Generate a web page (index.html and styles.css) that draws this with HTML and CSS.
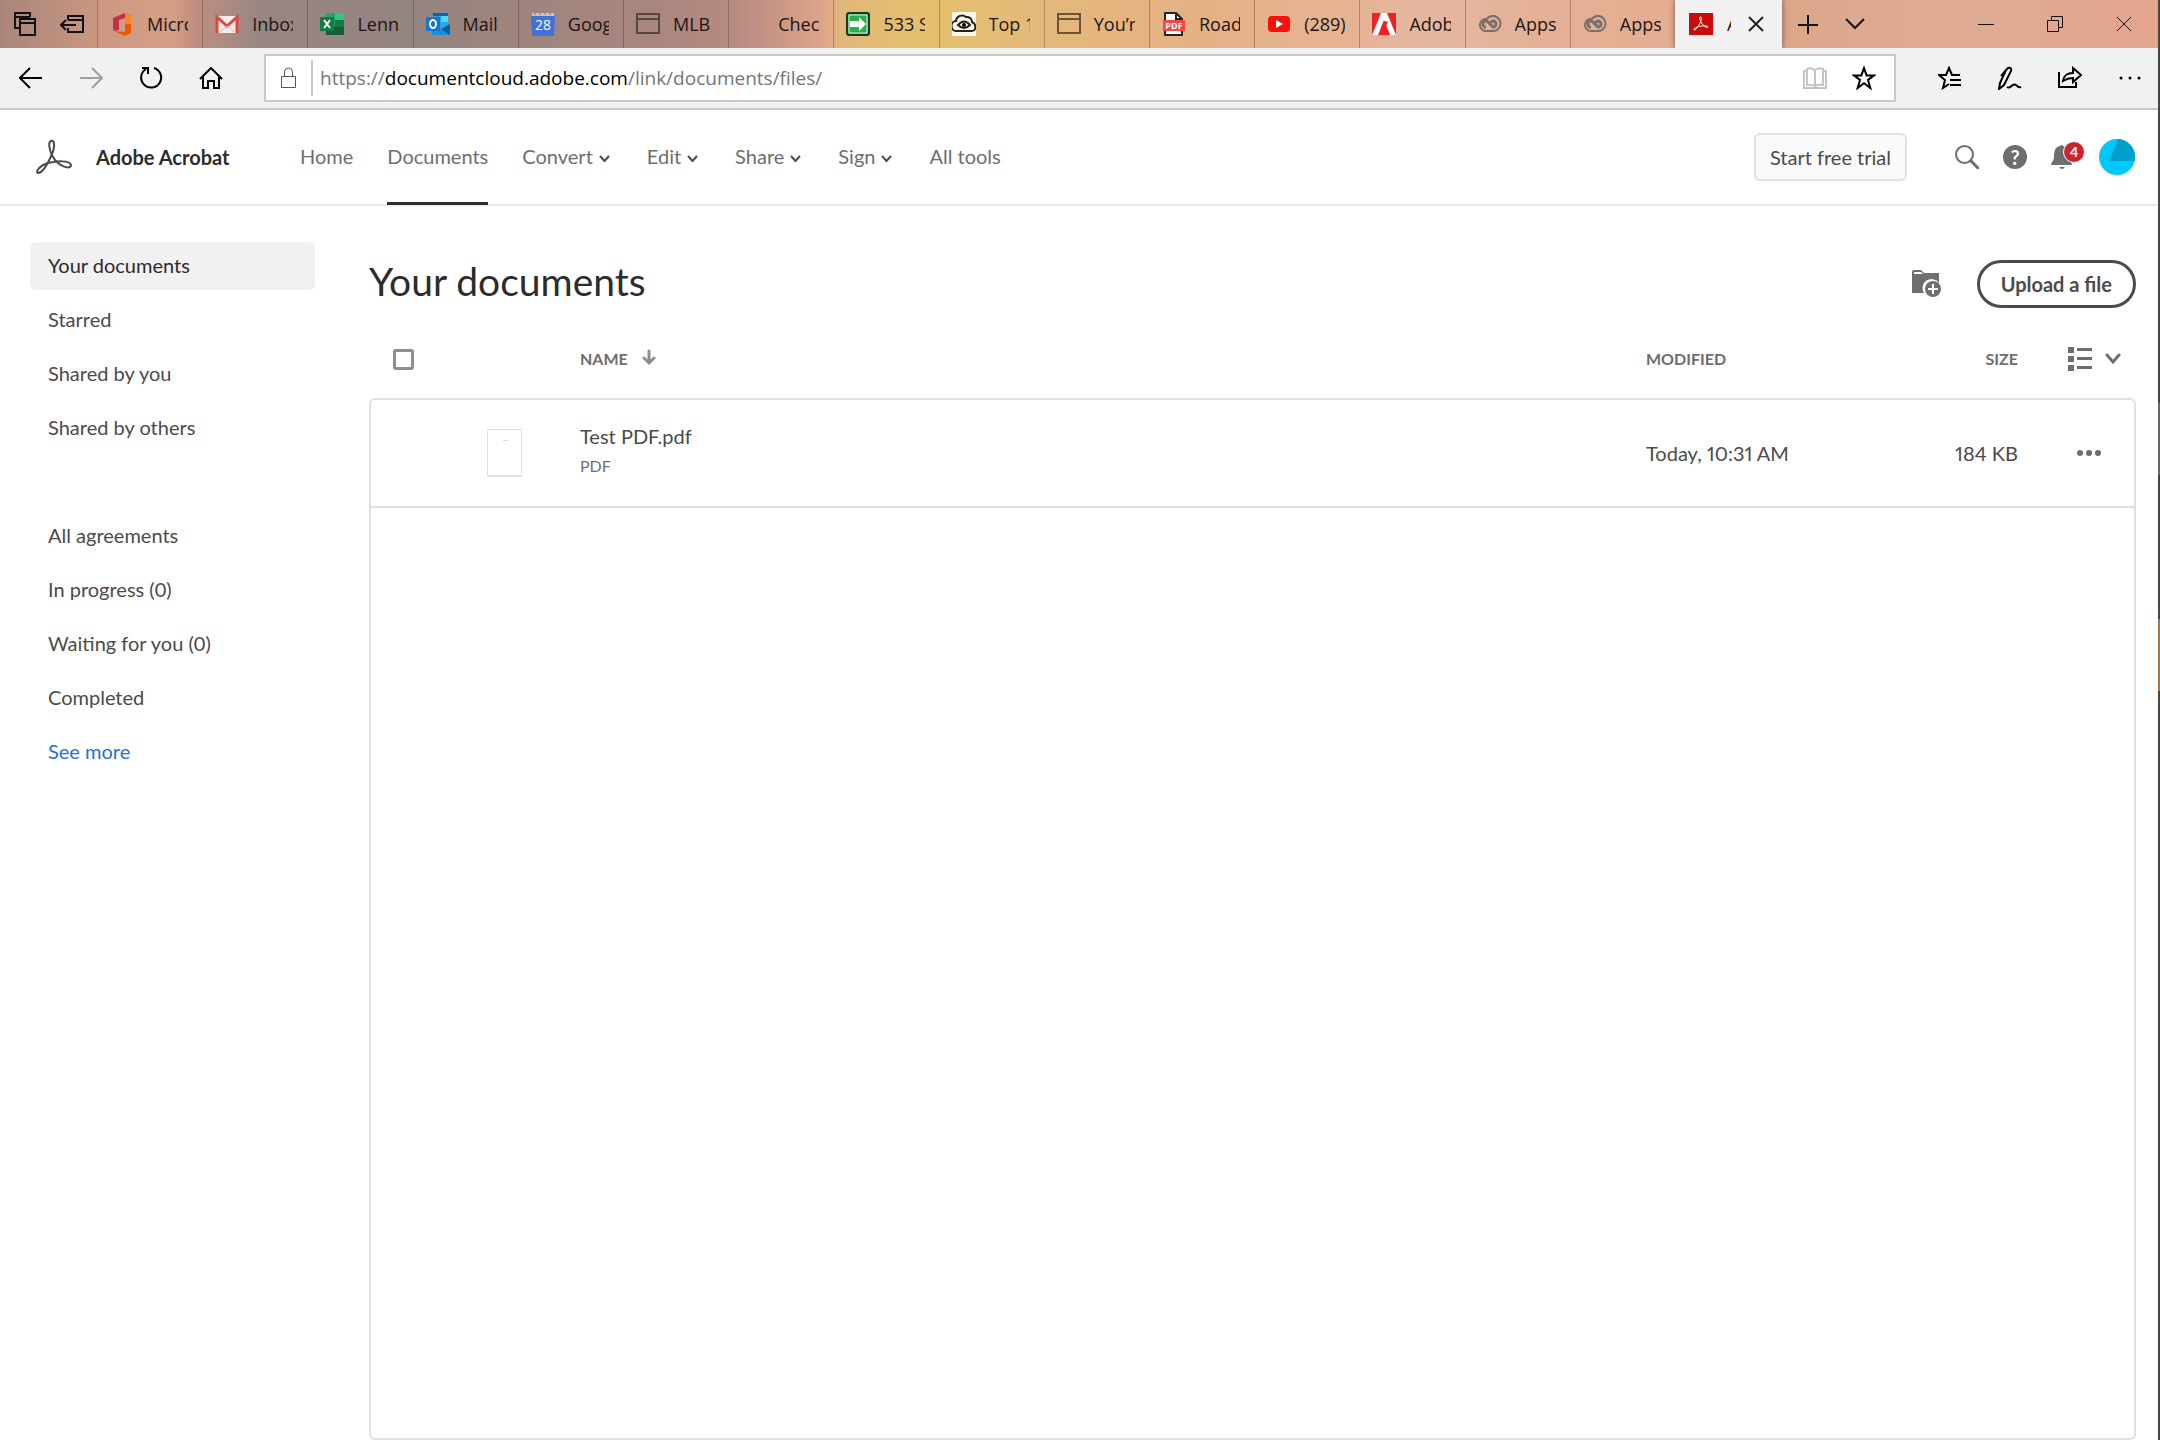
FILE: index.html
```html
<!DOCTYPE html>
<html lang="en">
<head>
    <meta charset="UTF-8">
    <meta name="viewport" content="width=device-width, initial-scale=1.0">
    <title>Adobe Acrobat</title>
    <link rel="stylesheet" href="styles.css">
</head>
<body>
<div class="window">

    <!-- browser tabs -->
    <div class="titlebar">
        <div class="tab-tools">
            <button class="icon-btn" aria-label="Tabs you've set aside"><svg width="24" height="26" viewBox="0 0 24 26" fill="none" stroke="#111" stroke-width="2"><path d="M6 17H2V2h15v4M2 6h15"/><path d="M7 8h15v16H7zM7 12h15"/></svg></button>
            <button class="icon-btn" aria-label="Set these tabs aside"><svg width="24" height="20" viewBox="0 0 24 20" fill="none" stroke="#111" stroke-width="2"><path d="M8 6V2h15v16H8v-4M8 6h15M1 11h15M6 6l-5 5 5 5"/></svg></button>
        </div>
        <div class="tabs">
            <a class="tab" href="#"><svg width="24" height="24" viewBox="0 0 24 24"><path d="M3 6L15 1v5L9 8v10l-5 1-1-3z" fill="#c2304a"/><path d="M15 1l6 2v18l-6 3L4 19l11 1z" fill="#e8590c"/><path d="M15 1l6 2v9h-6z" fill="#f58a1f"/></svg><span>Micro</span></a>
            <a class="tab" href="#"><svg width="24" height="24" viewBox="0 0 24 24"><path d="M1 4h22v17H1z" fill="#f6ebe8"/><path d="M2 21V5l10 9 10-9v16" fill="none" stroke="#dc4a41" stroke-width="3"/><path d="M5 20l7-6 7 6" fill="none" stroke="#d8b9b5"/></svg><span>Inbox</span></a>
            <a class="tab" href="#"><svg width="24" height="24" viewBox="0 0 24 24"><path d="M6 1h9v22H6z" fill="#21a366"/><path d="M15 1h9v7h-9z" fill="#33c481"/><path d="M15 8h9v7h-9z" fill="#107c41"/><path d="M6 15h18v8H6z" fill="#185c37"/><path d="M0 5h14v14H0z" fill="#107c41"/><path d="M4 8l6 8M10 8l-6 8" stroke="#fff" stroke-width="2"/></svg><span>Lenn</span></a>
            <a class="tab" href="#"><svg width="24" height="24" viewBox="0 0 24 24"><path d="M7 1h15v14H7z" fill="#28a8ea"/><path d="M7 1h15v3H7z" fill="#0364b8"/><path d="M15 4h7v6h-7z" fill="#50d9ff"/><path d="M6 13l9 4 9-5v11H6z" fill="#1490df"/><path d="M24 12v11l-9-6z" fill="#0a5ea8"/><path d="M0 5h14v14H0z" fill="#0f78d4"/><ellipse cx="7" cy="12" rx="3" ry="4" fill="none" stroke="#fff" stroke-width="2"/></svg><span>Mail</span></a>
            <a class="tab" href="#"><svg width="24" height="24" viewBox="0 0 24 24"><path d="M1 1h22v4H1z" fill="#c5c5c8"/><path d="M0 4h24l-1 20H1z" fill="#4070d8"/><path d="M4 1v2M9 1v2M14 1v2M19 1v2" stroke="#777"/><text x="12" y="18" class="cal-day">28</text></svg><span>Goog</span></a>
            <a class="tab" href="#"><svg width="24" height="24" viewBox="0 0 24 24" fill="none" stroke="#57453f" stroke-width="2"><path d="M1 2h22v19H1zM1 7h22"/></svg><span>MLB</span></a>
            <a class="tab" href="#"><svg width="24" height="24" viewBox="0 0 24 24" fill="none" stroke="#dc8690" stroke-width="2"><path d="M11 2v6M6 15l11 6M13 12L6 24" opacity=".7"/></svg><span>Chec</span></a>
            <a class="tab" href="#"><svg width="24" height="24" viewBox="0 0 24 24"><rect x="1" y="1" width="22" height="22" rx="2" fill="#2dad4f" stroke="#173a20" stroke-width="2"/><path d="M3 3h18v18H3z" fill="none" stroke="#dff2df"/><path d="M4 9h9V5l7 7-7 7v-4H4z" fill="#fff"/></svg><span>533 S</span></a>
            <a class="tab" href="#"><svg width="24" height="24" viewBox="0 0 24 24"><path d="M0 0h24v24H0z" fill="#faf6e8"/><path d="M5 19a5 5 0 0 1-1-10 6 6 0 0 1 10-4 5 5 0 0 1 6 5c5 2 4 9 0 9z" fill="none" stroke="#222" stroke-width="2"/><path d="M6 13q6-7 12 0-6 6-12 0z" fill="none" stroke="#222" stroke-width="2"/><circle cx="12" cy="13" r="2"/></svg><span>Top 1</span></a>
            <a class="tab" href="#"><svg width="24" height="24" viewBox="0 0 24 24" fill="none" stroke="#6b5438" stroke-width="2"><path d="M1 2h22v19H1zM1 7h22"/></svg><span>You’r</span></a>
            <a class="tab" href="#"><svg width="24" height="24" viewBox="0 0 24 24"><path d="M3 1h11l6 6v16H3z" fill="#fff" stroke="#222" stroke-width="2"/><path d="M14 1v6h6" fill="none" stroke="#222" stroke-width="2"/><path d="M1 8h22v11H1z" fill="#f04848"/><text x="12" y="17" class="pdf-mark">PDF</text></svg><span>Road</span></a>
            <a class="tab" href="#"><svg width="24" height="24" viewBox="0 0 24 24"><rect x="1" y="4" width="22" height="16" rx="4" fill="#f8100c"/><path d="M9 8l7 4-7 4z" fill="#fff"/></svg><span>(289)</span></a>
            <a class="tab" href="#"><svg width="24" height="24" viewBox="0 0 24 24"><path d="M0 1h24v22H0z" fill="#ed2224"/><path d="M9 1h6l9 22h-6l-2-5h-4l4-8 1 0-5-1-6 14H0z" fill="#fff"/><path d="M12 8l6 15h-4l-2-5H8z" fill="#ed2224"/></svg><span>Adob</span></a>
            <a class="tab" href="#"><svg width="24" height="24" viewBox="0 0 24 24" fill="none" stroke="#77706b" stroke-width="2"><path d="M7 19a6 6 0 1 1 2-12 7.500 7.500 0 1 1 7 12z"/><path d="M8 15a3 3 0 1 1 2-5l5 5a3 3 0 1 0 0-6 5 5 0 0 0-3 2" stroke-width="3"/></svg><span>Apps</span></a>
            <a class="tab" href="#"><svg width="24" height="24" viewBox="0 0 24 24" fill="none" stroke="#77706b" stroke-width="2"><path d="M7 19a6 6 0 1 1 2-12 7.500 7.500 0 1 1 7 12z"/><path d="M8 15a3 3 0 1 1 2-5l5 5a3 3 0 1 0 0-6 5 5 0 0 0-3 2" stroke-width="3"/></svg><span>Apps</span></a>
        </div>
        <div class="tab-active">
            <svg width="24" height="24" viewBox="0 0 24 24"><path d="M0 1h24v22H0z" fill="#c80a0a"/><path d="M11 5c3-1 1 7-5 13-4 0 2-5 12-4 3 2-2 3-6-4-1-2-2-4-1-5z" fill="none" stroke="#fff" stroke-width="1"/></svg>
            <span>A</span>
            <button class="icon-btn" aria-label="Close tab"><svg width="16" height="16" viewBox="0 0 16 16" stroke="#222" stroke-width="2"><path d="M1 1l14 14M15 1L1 15"/></svg></button>
        </div>
        <div class="window-tools">
            <button class="icon-btn" aria-label="New tab"><svg width="20" height="20" viewBox="0 0 20 20" stroke="#111" stroke-width="2"><path d="M0 11h20M10 1v20"/></svg></button>
            <button class="icon-btn" aria-label="Show tab previews"><svg width="20" height="12" viewBox="0 0 20 12" fill="none" stroke="#111" stroke-width="2"><path d="M1 1l9 9 9-9"/></svg></button>
            <div class="window-buttons">
                <button class="icon-btn" aria-label="Minimize"><svg width="16" height="16" viewBox="0 0 16 16" stroke="#111"><path d="M0 8.500h16"/></svg></button>
                <button class="icon-btn" aria-label="Restore"><svg width="16" height="16" viewBox="0 0 16 16" fill="none" stroke="#111"><path d="M.5 4.500h11v11H.5zM4.500 4V.5h11v11H12"/></svg></button>
                <button class="icon-btn" aria-label="Close"><svg width="16" height="16" viewBox="0 0 16 16" stroke="#111"><path d="M1 1l14 14M15 1L1 15"/></svg></button>
            </div>
        </div>
    </div>

    <!-- address bar -->
    <div class="toolbar">
        <div class="nav-buttons">
            <button class="icon-btn" aria-label="Back"><svg width="24" height="22" viewBox="0 0 24 22" fill="none" stroke="#000" stroke-width="2"><path d="M11 1L1 11l10 10M1 11h22"/></svg></button>
            <button class="icon-btn" aria-label="Forward"><svg width="24" height="22" viewBox="0 0 24 22" fill="none" stroke="#a0a0a0" stroke-width="2"><path d="M13 1l10 10-10 10M23 11H1"/></svg></button>
            <button class="icon-btn" aria-label="Refresh"><svg width="24" height="24" viewBox="0 0 24 24" fill="none" stroke="#000" stroke-width="2"><path d="M15 2a10 10 0 1 1-8 1M3 2h6v6"/></svg></button>
            <button class="icon-btn" aria-label="Home"><svg width="24" height="22" viewBox="0 0 24 22" fill="none" stroke="#000" stroke-width="2"><path d="M1 12L12 1l11 11M4 10v11h5v-7h6v7h5V10"/></svg></button>
        </div>
        <div class="address">
            <svg width="18" height="22" viewBox="0 0 18 22" fill="none" stroke="#555" stroke-width="1"><path d="M1.500 9.500h14v11h-14zM4.500 9.500V5a4 4 0 0 1 8 0v4.500"/></svg>
            <div class="url"><span>https://</span><b>documentcloud.adobe.com</b><span>/link/documents/files/</span></div>
            <button class="icon-btn" aria-label="Reading view"><svg width="24" height="22" viewBox="0 0 24 22" fill="none" stroke="#c4c4c4" stroke-width="2"><path d="M12 3v16M12 3q-4-3-8-1v16q4-1 8 1 4-2 8-1V2q-4-2-8 1M4 4H1v17h22V4h-3"/></svg></button>
            <button class="icon-btn" aria-label="Add to favorites"><svg width="24" height="24" viewBox="0 0 24 24" fill="none" stroke="#000" stroke-width="2"><path d="M12 2l2.600 7.400H22l-6 4.600 2.300 8L12 17.300 5.700 22 8 14 2 9.400h7.400z"/></svg></button>
        </div>
        <div class="browser-buttons">
            <button class="icon-btn" aria-label="Favorites"><svg width="24" height="24" viewBox="0 0 24 24" fill="none" stroke="#000" stroke-width="2"><path d="M22 9h-8l-3-7-3 7H1l6 5-2 8 6-4M12 14h11M12 19h11"/></svg></button>
            <button class="icon-btn" aria-label="Add notes"><svg width="24" height="24" viewBox="0 0 24 24" fill="none" stroke="#000" stroke-width="2"><path d="M10 2q4-1 3 3L6 19l-5 4 1-6L8 4zM7 5L3 10M9 21c4 3 5-5 9-2 2 2 3 3 5 2"/></svg></button>
            <button class="icon-btn" aria-label="Share"><svg width="24" height="24" viewBox="0 0 24 24" fill="none" stroke="#000" stroke-width="2"><path d="M1 6v15h17v-5M5 15c1-6 4-8 10-8V2l8 7-8 7v-4c-5 0-7 1-10 3z"/></svg></button>
            <button class="icon-btn" aria-label="Settings and more"><svg width="24" height="24" viewBox="0 0 24 24"><circle cx="3" cy="12" r="1.500"/><circle cx="12" cy="12" r="1.500"/><circle cx="21" cy="12" r="1.500"/></svg></button>
        </div>
    </div>

    <!-- acrobat header -->
    <header class="header">
        <a class="brand" href="#">
            <svg width="36" height="36" viewBox="0 0 36 36" fill="none" stroke="#4b4b4b" stroke-width="2"><path d="M15 2C19 0 19 9 16 15 13 22 7 34 2 34c-3-1 2-8 10-10 8-2 22-3 23 2 0 5-12 2-18-8C13 11 12 3 15 2z"/></svg>
            <span>Adobe Acrobat</span>
        </a>
        <nav class="menu">
            <a href="#">Home</a>
            <a class="current" href="#">Documents</a>
            <button>Convert <svg width="11" height="8" viewBox="0 0 11 8"><path d="M1 1l4.500 5L10 1"/></svg></button>
            <button>Edit <svg width="11" height="8" viewBox="0 0 11 8"><path d="M1 1l4.500 5L10 1"/></svg></button>
            <button>Share <svg width="11" height="8" viewBox="0 0 11 8"><path d="M1 1l4.500 5L10 1"/></svg></button>
            <button>Sign <svg width="11" height="8" viewBox="0 0 11 8"><path d="M1 1l4.500 5L10 1"/></svg></button>
            <a href="#">All tools</a>
        </nav>
        <button class="trial">Start free trial</button>
        <div class="account">
            <button class="icon-btn" aria-label="Search"><svg width="24" height="24" viewBox="0 0 24 24" fill="none" stroke="#6e6e6e" stroke-width="2"><circle cx="9.500" cy="9.500" r="8.500"/><path d="M16 16l7 7" stroke-width="3" stroke-linecap="round"/></svg></button>
            <button class="icon-btn help" aria-label="Help">?</button>
            <button class="icon-btn bell" aria-label="Notifications"><svg width="24" height="26" viewBox="0 0 24 26" fill="#6e6e6e"><path d="M9 2q2-2 3 0c5 1 6 5 6 11 0 4 3 5 3 8H0c0-3 3-4 3-8C3 7 4 3 9 2zM8 23h6q-3 4-6 0z"/></svg><span class="badge">4</span></button>
            <button class="icon-btn" aria-label="Profile"><svg width="36" height="36" viewBox="0 0 36 36"><circle cx="18" cy="18" r="18" fill="#00c8ff"/><path d="M19 0a18 18 0 0 1 17 18v4H10z" fill="#009fcc"/></svg></button>
        </div>
    </header>

    <div class="content">
        <aside class="sidebar">
            <nav class="side-group">
                <a class="selected" href="#">Your documents</a>
                <a href="#">Starred</a>
                <a href="#">Shared by you</a>
                <a href="#">Shared by others</a>
            </nav>
            <nav class="side-group">
                <a href="#">All agreements</a>
                <a href="#">In progress (0)</a>
                <a href="#">Waiting for you (0)</a>
                <a href="#">Completed</a>
                <a class="more" href="#">See more</a>
            </nav>
        </aside>

        <main class="documents">
            <div class="documents-head">
                <h1>Your documents</h1>
                <button class="icon-btn" aria-label="Create a folder"><svg width="30" height="30" viewBox="0 0 30 30"><path d="M0 3q0-2 2-2h7l3 3h15v10a9 9 0 0 0-15 10H0z" fill="#6e6e6e"/><path d="M2 3h7l2 2H2z" fill="#fff"/><circle cx="21" cy="20" r="8" fill="#6e6e6e"/><path d="M21 15v10M16 20h10" stroke="#fff" stroke-width="2"/></svg></button>
                <button class="upload">Upload a file</button>
            </div>
            <table class="files">
                <thead>
                    <tr>
                        <th class="col-select"><input type="checkbox" aria-label="Select all"></th>
                        <th class="col-thumb"></th>
                        <th>NAME <svg class="sort" width="14" height="16" viewBox="0 0 14 16" fill="none" stroke="#8e8e8e" stroke-width="3" stroke-linecap="round"><path d="M7 2v11M2 9l5 5 5-5"/></svg></th>
                        <th class="col-modified">MODIFIED</th>
                        <th class="col-size">SIZE</th>
                        <th class="col-actions"><button class="icon-btn view" aria-label="View options"><svg width="24" height="26" viewBox="0 0 24 26" fill="#6e6e6e"><path d="M0 1h6v6H0zM0 10h6v6H0zM0 19h6v6H0zM9 2h15v3H9zM9 11h15v3H9zM9 20h15v3H9z"/></svg><svg width="16" height="12" viewBox="0 0 16 12" fill="none" stroke="#6e6e6e" stroke-width="3" stroke-linecap="round"><path d="M2 2l6 7 6-7"/></svg></button></th>
                    </tr>
                </thead>
                <tbody>
                    <tr>
                        <td></td>
                        <td><div class="thumb"></div></td>
                        <td class="col-name"><div class="file-name">Test PDF.pdf</div><div class="file-type">PDF</div></td>
                        <td>Today, 10:31 AM</td>
                        <td class="col-size">184 KB</td>
                        <td class="col-actions"><button class="icon-btn row-more" aria-label="More options"><svg width="26" height="8" viewBox="0 0 26 8" fill="#6e6e6e"><circle cx="4" cy="4" r="3"/><circle cx="13" cy="4" r="3"/><circle cx="22" cy="4" r="3"/></svg></button></td>
                    </tr>
                </tbody>
            </table>
            <div class="files-empty"></div>
        </main>
    </div>
</div>
</body>
</html>
```

FILE: styles.css
```css
* {
    box-sizing: border-box;
}

body {
    margin: 0;
    font-family: Lato, "Open Sans", sans-serif;
    font-size: 20px;
    line-height: 24px;
    color: #4b4b4b;
    background: #fff;
}

a {
    color: inherit;
    text-decoration: none;
}

button {
    font: inherit;
    color: inherit;
    background: none;
    border: none;
    padding: 0;
    cursor: pointer;
}

svg {
    display: block;
    flex: none;
}

.icon-btn {
    display: flex;
    align-items: center;
    justify-content: center;
}

/* the desktop shows as a thin strip on the right */
.window {
    display: flex;
    flex-direction: column;
    min-height: 100vh;
    border-right: 2px solid;
    border-image: linear-gradient(#454545 28%, #666 28%, #666 33%, #454545 33%, #454545 43%, #b3743c 43%, #b3743c 48%, #454545 48%) 1;
}

/* tabs */
.titlebar {
    display: grid;
    grid-template-columns: 97px 1fr 107px 376px;
    height: 48px;
    font-family: "Open Sans", sans-serif;
    color: #1c1512;
    background: linear-gradient(90deg, #a98579 0, #cd9982 5%, #d59f87 8%, #c08f80 9%, #998683 12%, #94847f 19%, #a0857d 25%, #a88680 30%, #b68a81 34%, #dda38a 38%, #e2b77c 39%, #e4c16c 43%, #e4b97b 48%, #e4b184 55%, #e5b391 62%, #e5b7a1 66%, #e4b196 71%, #e5ad92 77%, #dba78b 83%, #e0ac94 91%, #e2a58c 100%);
}

.tab-tools {
    display: flex;
    align-items: center;
    gap: 23px;
    padding-left: 13px;
}

.tabs {
    display: grid;
    grid-template-columns: repeat(15, 1fr);
}

.tab {
    display: flex;
    align-items: center;
    gap: 13px;
    padding: 0 14px 0 12px;
    border-left: 1px solid rgba(60, 30, 20, 0.3);
    min-width: 0;
}

.tab span,
.tab-active span {
    overflow: hidden;
    white-space: nowrap;
    font-size: 18px;
}

.tab-active {
    display: flex;
    align-items: center;
    gap: 14px;
    padding: 0 18px 0 14px;
    background: #f1f1f1;
    box-shadow: 0 0 6px rgba(0, 0, 0, 0.5);
    clip-path: inset(0 -8px 0 -8px);
}

.tab-active span {
    width: 6px;
    margin-right: 3px;
}

.cal-day {
    font: 14px "Open Sans", sans-serif;
    text-anchor: middle;
    fill: #fff;
}

.pdf-mark {
    font: bold 9px "Open Sans", sans-serif;
    text-anchor: middle;
    fill: #fff;
}

.window-tools {
    display: flex;
    align-items: center;
    gap: 27px;
    padding: 0 26px 0 16px;
}

.window-buttons {
    display: flex;
    gap: 53px;
    margin-left: auto;
}

/* toolbar */
.toolbar {
    display: flex;
    align-items: center;
    height: 62px;
    padding: 0 16px 0 19px;
    background: #f1f1f1;
    border-bottom: 2px solid #c9c9c9;
}

.nav-buttons {
    display: flex;
    gap: 36px;
    margin-right: 41px;
}

.address {
    display: flex;
    align-items: center;
    flex: 1;
    height: 48px;
    padding: 0 18px 0 14px;
    background: #fff;
    border: 2px solid #c9c9c9;
    gap: 25px;
}

.address > svg {
    margin-right: -12px;
}

.url {
    flex: 1;
    padding-left: 7px;
    border-left: 2px solid #c9c9c9;
    font-family: "Open Sans", sans-serif;
    font-size: 19px;
    line-height: 36px;
    color: #767676;
}

.url b {
    font-weight: normal;
    color: #000;
}

.browser-buttons {
    display: flex;
    gap: 36px;
    margin-left: 42px;
}

/* acrobat header */
.header {
    display: flex;
    align-items: center;
    height: 96px;
    padding: 0 23px 0 36px;
    border-bottom: 2px solid #e8e8e8;
}

.brand {
    display: flex;
    align-items: center;
    gap: 24px;
    width: 264px;
    font-weight: 700;
    color: #2c2c2c;
}

.menu {
    display: flex;
    align-self: stretch;
    gap: 34px;
    color: #6e6e6e;
}

.menu a,
.menu button {
    display: flex;
    align-items: center;
    gap: 6px;
    border-bottom: 3px solid transparent;
    margin-bottom: -1px;
}

.menu .current {
    border-bottom-color: #2c2c2c;
}

.menu svg {
    fill: none;
    stroke: #4b4b4b;
    stroke-width: 2;
    margin: 6px 3px 0 0;
}

.trial {
    height: 48px;
    margin-left: auto;
    padding: 0 14px;
    background: #fafafa;
    border: 2px solid #e1e1e1;
    border-radius: 6px;
}

.account {
    display: flex;
    align-items: center;
    gap: 24px;
    margin-left: 48px;
}

.help {
    width: 24px;
    height: 24px;
    border-radius: 50%;
    background: #6e6e6e;
    color: #fff;
    font-weight: 700;
}

.bell {
    position: relative;
}

.badge {
    position: absolute;
    left: 12px;
    top: -3px;
    width: 22px;
    height: 22px;
    border: 1px solid #fff;
    border-radius: 50%;
    background: #c9252d;
    color: #fff;
    font-size: 14px;
    font-weight: 700;
    line-height: 20px;
}

/* page */
.content {
    display: flex;
    flex: 1;
    padding: 0 22px 0 30px;
}

.sidebar {
    width: 285px;
    padding-top: 36px;
}

.side-group {
    display: flex;
    flex-direction: column;
    gap: 6px;
    margin-bottom: 60px;
}

.side-group a {
    padding: 11px 18px 13px;
    border-radius: 6px;
}

.side-group .selected {
    background: #f1f1f1;
    color: #2c2c2c;
}

.side-group .more {
    color: #2671d1;
}

.documents {
    display: flex;
    flex-direction: column;
    flex: 1;
    margin-left: 54px;
    padding-top: 54px;
}

.documents-head {
    display: flex;
    align-items: center;
    height: 48px;
    margin-bottom: 14px;
}

h1 {
    margin: 0 auto 6px 0;
    font-size: 39px;
    font-weight: 400;
    line-height: 48px;
    color: #2c2c2c;
}

.upload {
    height: 48px;
    margin-left: 35px;
    padding: 0 21px;
    border: 3px solid #4b4b4b;
    border-radius: 24px;
    font-weight: 700;
}

.files {
    width: 100%;
    table-layout: fixed;
    border-collapse: separate;
    border-spacing: 0;
    font-variant-numeric: proportional-nums;
}

.files th {
    height: 76px;
    padding: 0 0 2px;
    font-size: 16px;
    text-align: left;
    color: #6e6e6e;
}

.files td {
    height: 110px;
    padding: 0;
    border: solid #e0e0e0;
    border-width: 2px 0;
}

.files td:first-child {
    border-left-width: 2px;
    border-top-left-radius: 6px;
}

.files td:last-child {
    border-right-width: 2px;
    border-top-right-radius: 6px;
}

.files .col-name {
    padding-bottom: 6px;
}

.col-select {
    width: 118px;
}

.col-thumb {
    width: 93px;
}

.col-modified {
    width: 250px;
}

.files .col-size {
    width: 122px;
    text-align: right;
}

.col-actions {
    width: 118px;
}

.col-select input {
    appearance: none;
    display: block;
    width: 21px;
    height: 21px;
    margin: 0 0 0 24px;
    border: 3px solid #8e8e8e;
    border-radius: 3px;
}

.sort {
    display: inline-block;
    margin-left: 10px;
}

.view {
    gap: 13px;
    margin-left: 50px;
}

.row-more {
    margin-left: 58px;
}

.thumb {
    width: 35px;
    height: 48px;
    border: 1px solid #e1e1e1;
    border-bottom-width: 2px;
    background: linear-gradient(#ddd, #ddd) 15px 10px / 5px 1px no-repeat;
}

.file-type {
    margin-top: 8px;
    font-size: 16px;
    line-height: 20px;
    color: #6e6e6e;
}

.files-empty {
    flex: 1;
    border: 2px solid #e0e0e0;
    border-top: none;
    border-radius: 0 0 6px 6px;
}
```
